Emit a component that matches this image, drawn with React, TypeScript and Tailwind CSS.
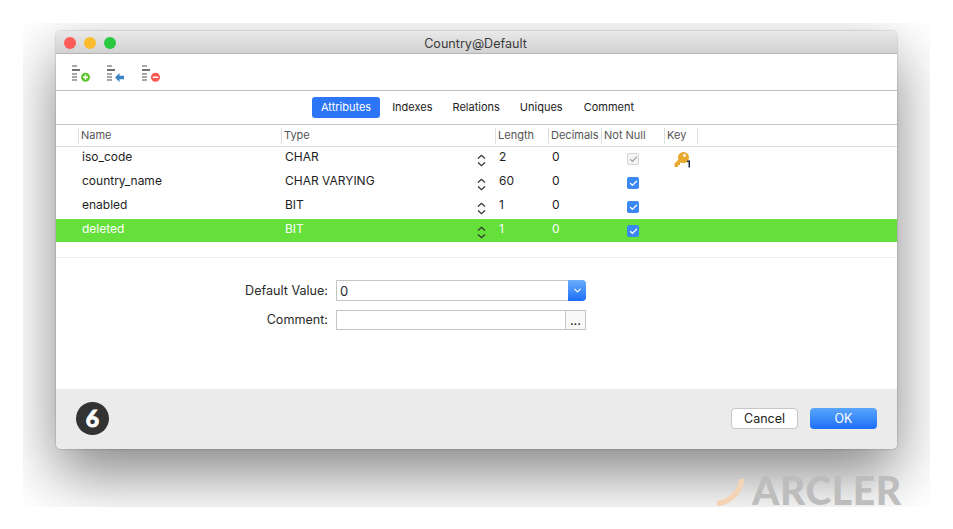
import { ChevronDown, Check } from "lucide-react";

const font = "font-['Inter','Liberation_Sans',sans-serif]";

const columns = [
  { name: "", width: "w-[23px]" },
  { name: "Name", width: "w-[203px]" },
  { name: "Type", width: "w-[214px]" },
  { name: "Length", width: "w-[53px]" },
  { name: "Decimals", width: "w-[53px]" },
  { name: "Not Null", width: "w-[63px]" },
  { name: "Key", width: "w-[33px]" },
];

const rows = [
  { name: "iso_code", type: "CHAR", length: "2", locked: true },
  { name: "country_name", type: "CHAR VARYING", length: "60" },
  { name: "enabled", type: "BIT", length: "1" },
  { name: "deleted", type: "BIT", length: "1", selected: true },
];

function RowsIcon({ children }: { children: React.ReactNode }) {
  return (
    <svg width="20" height="18" viewBox="0 0 20 18">
      <rect x="0" y="0" width="5" height="2" fill="#a8a8a8" />
      <rect x="0" y="4" width="8" height="2" fill="#707070" />
      <rect x="0" y="8" width="5" height="2" fill="#a8a8a8" />
      <rect x="0" y="11" width="5" height="2" fill="#a8a8a8" />
      <rect x="0" y="14" width="5" height="2" fill="#a8a8a8" />
      {children}
    </svg>
  );
}

function Stepper() {
  return (
    <svg width="9" height="13" viewBox="0 0 9 13" fill="none" stroke="#333" strokeWidth="1.2">
      <path d="M1 4.5 L4.5 1.2 L8 4.5" />
      <path d="M1 8.5 L4.5 11.8 L8 8.5" />
    </svg>
  );
}

function KeyIcon() {
  return (
    <svg width="19" height="16" viewBox="0 0 19 16">
      <circle cx="9.5" cy="5.5" r="5.5" fill="#e8a92e" />
      <circle cx="10.5" cy="3.5" r="1.4" fill="#fff" />
      <path d="M6 6 L0.5 11.5 L0.5 15 L4 15 L4 13 L6 13 L6 11 L11 9 Z" fill="#e8a92e" />
      <path d="M13 8.8 L16 8.3 L16 15.5 L14.5 15.5 L14.5 10 L13 10.3 Z" fill="#1c2a4a" />
    </svg>
  );
}

function CheckBox({ locked }: { locked?: boolean }) {
  if (locked) {
    return (
      <div className="w-[12px] h-[12px] rounded-[2px] border border-[#d4d4d4] bg-[#f4f4f4] flex items-center justify-center">
        <Check size={9} strokeWidth={3} className="text-[#a0a0a0]" />
      </div>
    );
  }
  return (
    <div className="w-[12px] h-[12px] rounded-[2px] bg-[#3b88f5] flex items-center justify-center">
      <Check size={9} strokeWidth={3.5} className="text-white" />
    </div>
  );
}

export default function App() {
  return (
    <div className={`relative w-[953px] h-[529px] bg-white pt-[23px] pl-[23px] overflow-hidden ${font}`}>
      <div className="w-[907px] h-[484px] overflow-hidden pt-[8px] pl-[33px]">
        <div className="w-[841px] h-[418px] flex flex-col bg-white rounded-[5px] overflow-hidden shadow-[0_0_2px_rgba(0,0,0,0.35),0_25px_60px_0_rgba(0,0,0,0.48)]">
          {/* Title bar */}
          <div className="relative h-[23px] shrink-0 bg-gradient-to-b from-[#e9e9e9] to-[#d2d2d2] border-b border-[#b4b4b4] flex items-center justify-center">
            <div className="absolute left-[8px] top-[6px] flex gap-[8px]">
              <div className="w-[12px] h-[12px] rounded-full bg-[#fc5b57]" />
              <div className="w-[12px] h-[12px] rounded-full bg-[#fdbb2e]" />
              <div className="w-[12px] h-[12px] rounded-full bg-[#2ac83f]" />
            </div>
            <span className="text-[12.6px] leading-none text-[#3c3c3c] pt-[4px] pr-[2px]">Country@Default</span>
          </div>

          {/* Toolbar */}
          <div className="h-[37px] shrink-0 border-b border-[#bdbdbd] flex items-center pl-[16px] gap-[15px] pt-[4px]">
            <RowsIcon>
              <circle cx="13.5" cy="12.3" r="4.5" fill="#5fc62c" />
              <path d="M11 12.3 H16 M13.5 9.8 V14.8" stroke="#fff" strokeWidth="1.4" />
            </RowsIcon>
            <RowsIcon>
              <path d="M8 12.5 L12.5 8 V10.7 H17 V14.3 H12.5 V17 Z" fill="#3d83c4" />
            </RowsIcon>
            <RowsIcon>
              <circle cx="13.5" cy="12.3" r="4.5" fill="#f9574f" />
              <path d="M10.8 12.3 H16.2" stroke="#fff" strokeWidth="1.6" />
            </RowsIcon>
          </div>

          {/* Tabs */}
          <div className="h-[34px] shrink-0 border-b border-[#c6c6c6] flex items-center justify-center pr-[7px] gap-[12px] text-[11px] text-[#1c1c1c]">
            <div className="h-[21px] px-[9px] flex items-center rounded-[3px] bg-[#2c75f6] text-white">Attributes</div>
            <div>Indexes</div>
            <div className="ml-[8px]">Relations</div>
            <div className="ml-[8px]">Uniques</div>
            <div className="ml-[9px]">Comment</div>
          </div>

          {/* Column headers */}
          <div className="h-[22px] shrink-0 border-b border-[#dcdcdc] flex items-center text-[11px] text-[#555]">
            {columns.map((c, i) => (
              <div key={i} className={`${c.width} h-[16px] leading-[15px] pl-[2px] whitespace-nowrap border-r border-[#dedede]`}>
                {c.name}
              </div>
            ))}
          </div>

          {/* Rows */}
          <div className="flex flex-col border-b border-[#ebebeb] pb-[15px] text-[12px]">
            {rows.map((r) => (
              <div key={r.name} className={`flex ${r.selected ? "h-[23px] bg-[#65e03a] text-white" : "h-[24px] text-[#1e1e1e]"}`}>
                <div className="w-[23px]" />
                <div className="w-[203px] pl-[3px] pt-[1px]">{r.name}</div>
                <div className="w-[195px] pl-[3px] pt-[1px]">{r.type}</div>
                <div className="w-[19px] pt-[7px]"><Stepper /></div>
                <div className="w-[53px] pl-[3px] pt-[1px]">{r.length}</div>
                <div className="w-[53px] pl-[3px] pt-[1px]">0</div>
                <div className="w-[63px] pt-[6px] pl-[25px]"><CheckBox locked={r.locked} /></div>
                <div className="w-[33px] pl-[9px] pt-[5px]">{r.locked ? <KeyIcon /> : null}</div>
              </div>
            ))}
          </div>

          {/* Form */}
          <div className="flex-1 pt-[21px] flex flex-col gap-[8px] text-[12.6px] text-[#2a2a2a]">
            <div className="flex items-center h-[22px]">
              <div className="w-[280px] text-right pr-[8px] pt-[2px]">Default Value:</div>
              <div className="w-[250px] h-[21px] flex border border-[#c4c4c4] rounded-r-[4px] bg-white">
                <div className="flex-1 pl-[3px] text-[13px] leading-[20px]">0</div>
                <div className="w-[18px] -my-[1px] -mr-[1px] rounded-r-[4px] bg-gradient-to-b from-[#6aaefc] to-[#1a6cf5] flex items-center justify-center">
                  <ChevronDown size={11} strokeWidth={2.5} className="text-white" />
                </div>
              </div>
            </div>
            <div className="flex items-center h-[21px]">
              <div className="w-[280px] text-right pr-[8px] pt-[2px]">Comment:</div>
              <div className="w-[230px] h-[20px] border border-[#c4c4c4] bg-white" />
              <div className="w-[20px] h-[20px] border border-l-0 border-[#c4c4c4] bg-[#f8f8f8] text-center leading-[18px] text-[13px] text-[#222]">...</div>
            </div>
          </div>

          {/* Footer */}
          <div className="h-[60px] shrink-0 bg-[#ebebeb] flex items-center px-[20px] pb-[2px]">
            <div className="w-[33px] h-[33px] rounded-full bg-[#333] flex items-center justify-center text-white font-black text-[23px] leading-none font-['Lato',sans-serif] [-webkit-text-stroke:0.8px_white]">6</div>
            <div className="ml-auto flex gap-[12px] text-[12.5px]">
              <div className="w-[67px] h-[21px] pt-[2px] rounded-[4px] bg-white border border-[#c6c6c6] flex items-center justify-center text-[#222]">Cancel</div>
              <div className="w-[67px] h-[21px] pt-[2px] rounded-[4px] bg-gradient-to-b from-[#5aa6fb] to-[#1c6ef7] flex items-center justify-center text-white">OK</div>
            </div>
          </div>
        </div>
      </div>

      {/* Watermark */}
      <div className="absolute left-[716px] top-[471px] flex items-center gap-[8px]">
        <svg width="28" height="30" viewBox="0 0 28 30" fill="none">
          <path d="M25.5 3 C25 15 15 26 1 27.5" stroke="#f2d4b5" strokeWidth="5.5" />
        </svg>
        <span className="text-[39px] leading-none font-black tracking-[0.6px] text-[#bdbdbd] font-['Lato',sans-serif]">ARCLER</span>
      </div>
    </div>
  );
}
